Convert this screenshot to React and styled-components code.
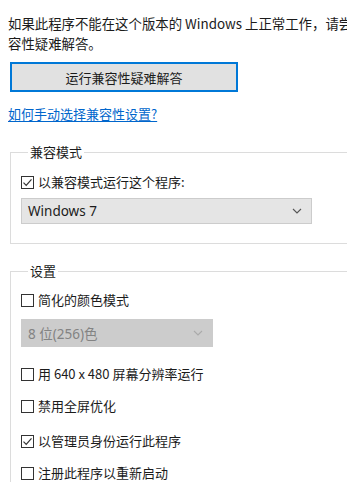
import React from 'react';
import styled, { createGlobalStyle } from 'styled-components';

const GlobalStyle = createGlobalStyle`
  html, body {
    margin: 0;
    padding: 0;
    background: #ffffff;
  }
  body {
    font-family: "Noto Sans CJK SC", "Noto Sans", sans-serif;
    font-size: 13px;
    color: #1b1b1b;
    overflow: hidden;
  }
`;

const Page = styled.div`
  width: 347px;
  height: 487px;
  overflow: hidden;
  padding: 14px 0 0 8px;
  box-sizing: border-box;
`;

const Intro = styled.p`
  margin: 0;
  line-height: 19.5px;
  font-size: 13.4px;
  white-space: nowrap;
`;

const TroubleButton = styled.button`
  display: block;
  margin: 9px 0 0 2px;
  width: 228px;
  height: 30px;
  border: 2px solid #0078d7;
  background: #e1e1e1;
  font-family: inherit;
  font-size: 13px;
  color: #1b1b1b;
  padding: 0;
`;

const HelpLink = styled.a`
  display: inline-block;
  margin-top: 13px;
  line-height: 18px;
  color: #0066cc;
  text-decoration: underline;
  text-underline-offset: 2px;
`;

const Group = styled.fieldset`
  margin: ${p => p.$top}px 0 0 2px;
  padding: 0 0 ${p => p.$bottom}px 10px;
  border: 1px solid #dcdcdc;
  border-right: none;
  ${p => p.$open && 'border-bottom: none;'}
  min-width: 0;
`;

const Legend = styled.legend`
  margin-left: 7px;
  padding: 0 2px;
  line-height: 18px;
  color: #1b1b1b;
`;

const CheckRow = styled.label`
  display: flex;
  align-items: center;
  gap: 4px;
  height: 18px;
  margin-top: ${p => p.$top}px;
  line-height: 18px;
`;

const Box = styled.span`
  width: 13px;
  height: 13px;
  box-sizing: border-box;
  border: 1px solid #333333;
  background: #ffffff;
  display: flex;
  align-items: center;
  justify-content: center;
  flex-shrink: 0;
`;

const Select = styled.div`
  display: flex;
  align-items: center;
  justify-content: space-between;
  box-sizing: border-box;
  width: ${p => p.$w}px;
  height: ${p => p.$h}px;
  margin-top: ${p => p.$top}px;
  padding: 0 9px 0 6px;
  background: ${p => (p.$disabled ? '#cccccc' : '#e5e5e5')};
  border: 1px solid #cccccc;
  color: ${p => (p.$disabled ? '#838383' : '#1b1b1b')};
  font-family: "Noto Sans", "Noto Sans CJK SC", sans-serif;
  font-size: 13.5px;
`;

function Check({ checked }) {
  return (
    <Box>
      {checked && (
        <svg width="11" height="11" viewBox="0 0 11 11">
          <path d="M1.5 5.6 L4.2 8.3 L9.5 2.4" fill="none" stroke="#333" strokeWidth="1.2" />
        </svg>
      )}
    </Box>
  );
}

function Chevron({ color }) {
  return (
    <svg width="10" height="6" viewBox="0 0 10 6">
      <path d="M1 1 L5 5 L9 1" fill="none" stroke={color} strokeWidth="1.1" />
    </svg>
  );
}

function Option({ label, checked, top }) {
  return (
    <CheckRow $top={top}>
      <Check checked={checked} />
      <span>{label}</span>
    </CheckRow>
  );
}

export default function App() {
  return (
    <>
      <GlobalStyle />
      <Page>
        <Intro>
          如果此程序不能在这个版本的 Windows 上正常工作，请尝试运行兼
          <br />
          容性疑难解答。
        </Intro>
        <TroubleButton>运行兼容性疑难解答</TroubleButton>
        <HelpLink>如何手动选择兼容性设置?</HelpLink>

        <Group $top={20} $bottom={19}>
          <Legend>兼容模式</Legend>
          <Option label="以兼容模式运行这个程序:" checked top={12} />
          <Select $w={291} $h={26} $top={7}>
            <span>Windows 7</span>
            <Chevron color="#555" />
          </Select>
        </Group>

        <Group $top={18} $bottom={0} $open>
          <Legend>设置</Legend>
          <Option label="简化的颜色模式" top={11} />
          <Select $w={192} $h={28} $top={10} $disabled>
            <span>8 位(256)色</span>
            <Chevron color="#aaa" />
          </Select>
          <Option label="用 640 x 480 屏幕分辨率运行" top={18} />
          <Option label="禁用全屏优化" top={14} />
          <Option label="以管理员身份运行此程序" checked top={17} />
          <Option label="注册此程序以重新启动" top={14} />
        </Group>
      </Page>
    </>
  );
}
